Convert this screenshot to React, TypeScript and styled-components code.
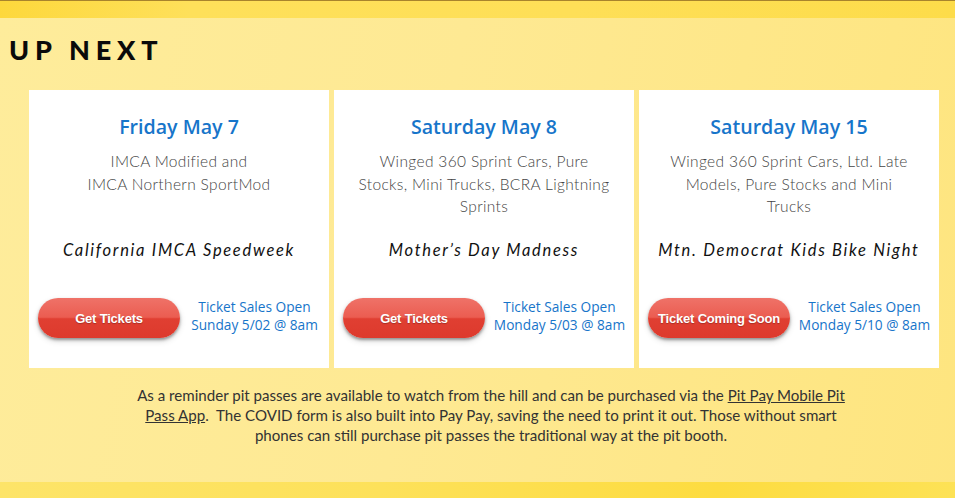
import React from "react";
import styled, { createGlobalStyle } from "styled-components";

const GlobalStyle = createGlobalStyle`
  html, body { margin: 0; padding: 0; }
  body { font-family: "Lato", "Liberation Sans", sans-serif; }
`;

type Race = {
  date: string;
  classes: string[];
  title: string;
  button: string;
  opensLine: string;
};

const races: Race[] = [
  {
    date: "Friday May 7",
    classes: ["IMCA Modified and", "IMCA Northern SportMod"],
    title: "California IMCA Speedweek",
    button: "Get Tickets",
    opensLine: "Sunday 5/02 @ 8am",
  },
  {
    date: "Saturday May 8",
    classes: ["Winged 360 Sprint Cars, Pure", "Stocks, Mini Trucks, BCRA Lightning", "Sprints"],
    title: "Mother’s Day Madness",
    button: "Get Tickets",
    opensLine: "Monday 5/03 @ 8am",
  },
  {
    date: "Saturday May 15",
    classes: ["Winged 360 Sprint Cars, Ltd. Late", "Models, Pure Stocks and Mini", "Trucks"],
    title: "Mtn. Democrat Kids Bike Night",
    button: "Ticket Coming Soon",
    opensLine: "Monday 5/10 @ 8am",
  },
];

// page shell
const Page = styled.div`
  display: flex;
  flex-direction: column;
  height: 100vh;
  overflow: hidden;
  background: linear-gradient(100deg, #feec9b 0%, #fee993 45%, #fee57f 100%);
`;

const TopStrip = styled.div`
  height: 17px;
  flex-shrink: 0;
  border-top: 1px solid #a8842c;
  background: linear-gradient(100deg, #fdd83c 0%, #fee05a 20%, #fedf57 60%, #fddc4a 100%);
`;

const BottomStrip = styled.div`
  height: 16px;
  flex-shrink: 0;
  background: linear-gradient(100deg, #fde469 0%, #fde15a 40%, #fddc40 75%, #fde256 100%);
`;

const Main = styled.section`
  flex: 1;
  padding-top: 18px;
`;

const Heading = styled.h2`
  margin: 0 0 26px 9px;
  font-family: "Lato", sans-serif;
  font-weight: 900;
  font-size: 27px;
  line-height: 28px;
  letter-spacing: 5.8px;
  color: #0a0a0a;
`;

// cards
const CardRow = styled.div`
  display: grid;
  grid-template-columns: repeat(3, 300px);
  gap: 5px;
  margin-left: 29px;
`;

const Card = styled.article`
  background: #ffffff;
  height: 278px;
  box-sizing: border-box;
  padding-top: 24px;
  display: flex;
  flex-direction: column;
  align-items: center;
`;

const DateTitle = styled.h3`
  margin: 0;
  font-family: "Open Sans", sans-serif;
  font-weight: 600;
  font-size: 19.6px;
  line-height: 26px;
  color: #1775ca;
`;

const Classes = styled.p`
  margin: 10px 0 0;
  height: 68px;
  font-family: "Lato", sans-serif;
  font-weight: 300;
  font-size: 15.5px;
  line-height: 22.5px;
  letter-spacing: 0.35px;
  color: #444;
  text-align: center;
  white-space: nowrap;
`;

const EventName = styled.p`
  margin: 20px 0 0;
  font-family: "Lato", sans-serif;
  font-style: italic;
  font-weight: 400;
  font-size: 16.5px;
  line-height: 24px;
  letter-spacing: 1.7px;
  color: #111;
  white-space: nowrap;
`;

const ActionRow = styled.div`
  align-self: stretch;
  margin-top: 36px;
  display: flex;
  align-items: center;
  padding-left: 9px;
`;

const TicketButton = styled.a`
  width: 142px;
  height: 40px;
  flex-shrink: 0;
  display: flex;
  align-items: center;
  justify-content: center;
  border-radius: 20px;
  background: linear-gradient(180deg, #ef7268 0%, #eb5d51 48%, #e03f32 52%, #dd3a2d 100%);
  box-shadow: 0 2px 3px rgba(0, 0, 0, 0.35), 0 3px 6px rgba(0, 0, 0, 0.15);
  font-family: "Liberation Sans", Arial, sans-serif;
  font-weight: 700;
  font-size: 13px;
  color: #fff;
  text-shadow: 0 1px 1px rgba(0, 0, 0, 0.25);
  letter-spacing: -0.2px;
  cursor: pointer;
`;

const SalesNote = styled.div`
  flex: 1;
  padding-bottom: 4px;
  text-align: center;
  font-family: "Open Sans", sans-serif;
  font-size: 13.7px;
  line-height: 18px;
  color: #1775ca;
`;

// reminder text
const Reminder = styled.p`
  margin: 17px 0 0 29px;
  width: 910px;
  padding-left: 14px;
  box-sizing: border-box;
  text-align: center;
  font-family: "Lato", sans-serif;
  font-size: 15.1px;
  line-height: 20px;
  color: #333;

  a {
    color: #333;
    text-decoration: underline;
  }
`;

const RaceCard = ({ race }: { race: Race }) => (
  <Card>
    <DateTitle>{race.date}</DateTitle>
    <Classes>
      {race.classes.map((line, i) => (
        <React.Fragment key={i}>
          {line}
          {i < race.classes.length - 1 && <br />}
        </React.Fragment>
      ))}
    </Classes>
    <EventName>{race.title}</EventName>
    <ActionRow>
      <TicketButton>{race.button}</TicketButton>
      <SalesNote>
        Ticket Sales Open
        <br />
        {race.opensLine}
      </SalesNote>
    </ActionRow>
  </Card>
);

export default function App() {
  return (
    <>
      <GlobalStyle />
      <Page>
        <TopStrip />
        <Main>
          <Heading>UP NEXT</Heading>
          <CardRow>
            {races.map((r) => (
              <RaceCard key={r.date} race={r} />
            ))}
          </CardRow>
          <Reminder>
            As a reminder pit passes are available to watch from the hill and can be purchased via the{" "}
            <a>Pit Pay Mobile Pit</a>
            <br />
            <a>Pass App</a>.&nbsp; The COVID form is also built into Pay Pay, saving the need to print it out. Those
            without smart
            <br />
            phones can still purchase pit passes the traditional way at the pit booth.
          </Reminder>
        </Main>
        <BottomStrip />
      </Page>
    </>
  );
}
